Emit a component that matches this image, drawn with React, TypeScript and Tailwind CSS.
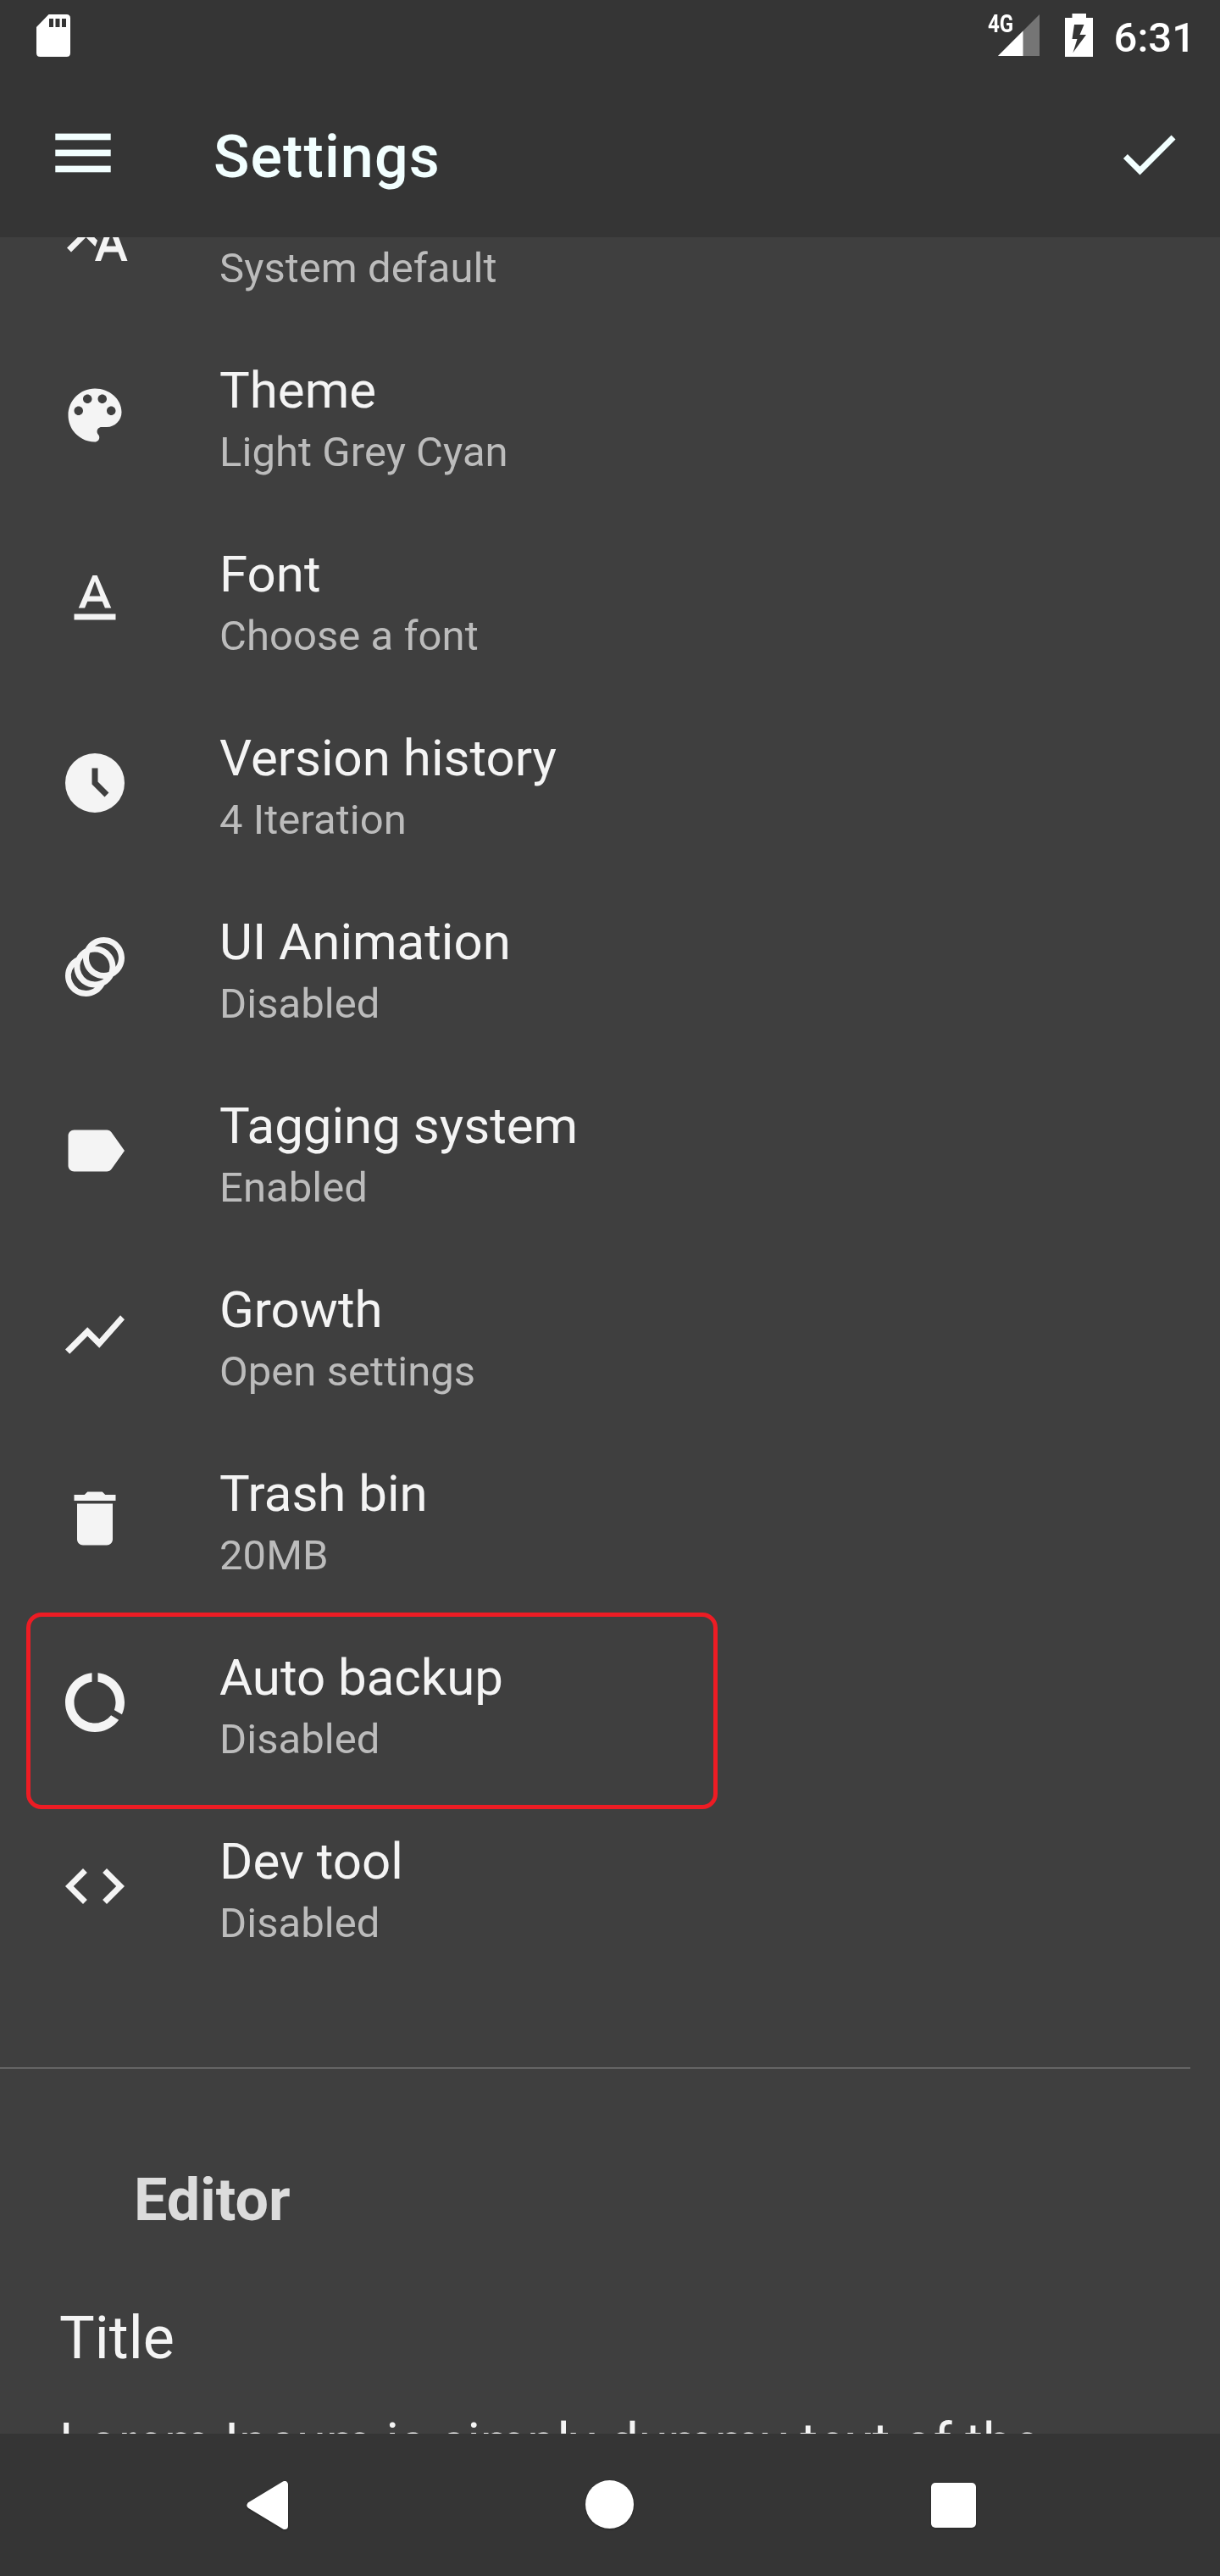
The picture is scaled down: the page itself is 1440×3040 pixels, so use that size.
import React from "react";
import {
  MdAnimation,
  MdCode,
  MdDataUsage,
  MdDelete,
  MdLabel,
  MdShowChart,
  MdTextFormat,
  MdTranslate,
} from "react-icons/md";

function ClockIcon({ className }: { className?: string }) {
  return (
    <svg viewBox="0 0 24 24" fill="currentColor" className={className}>
      <path
        fillRule="evenodd"
        d="M12 2a10 10 0 1 0 0 20a10 10 0 0 0 0-20zM11 7v5.41l4.29 4.29 1.41-1.41L13 11.59V7z"
      />
    </svg>
  );
}

function PaletteIcon({ className }: { className?: string }) {
  return (
    <svg viewBox="0 0 24 24" fill="currentColor" className={className}>
      <path d="M12 3c-4.97 0-9 4.03-9 9s4.03 9 9 9c.83 0 1.5-.67 1.5-1.5 0-.39-.15-.74-.39-1.01-.23-.26-.38-.61-.38-.99 0-.83.67-1.5 1.5-1.5H16c2.76 0 5-2.24 5-5 0-4.42-4.03-8-9-8zm-5.5 9c-.83 0-1.5-.67-1.5-1.5S5.67 9 6.5 9 8 9.67 8 10.5 7.33 12 6.5 12zm3-4C8.67 8 8 7.33 8 6.5S8.67 5 9.5 5s1.5.67 1.5 1.5S10.33 8 9.5 8zm5 0c-.83 0-1.5-.67-1.5-1.5S13.67 5 14.5 5s1.5.67 1.5 1.5S15.33 8 14.5 8zm3 4c-.83 0-1.5-.67-1.5-1.5S16.67 9 17.5 9s1.5.67 1.5 1.5-.67 1.5-1.5 1.5z" />
    </svg>
  );
}

type Item = {
  title?: string;
  detail: string;
  Icon: React.ComponentType<{ className?: string }>;
  highlighted?: boolean;
};

// The first row is scrolled half out of view, so only its detail line remains.
const items: Item[] = [
  { detail: "System default", Icon: MdTranslate },
  { title: "Theme", detail: "Light Grey Cyan", Icon: PaletteIcon },
  { title: "Font", detail: "Choose a font", Icon: MdTextFormat },
  { title: "Version history", detail: "4 Iteration", Icon: ClockIcon },
  { title: "UI Animation", detail: "Disabled", Icon: MdAnimation },
  { title: "Tagging system", detail: "Enabled", Icon: MdLabel },
  { title: "Growth", detail: "Open settings", Icon: MdShowChart },
  { title: "Trash bin", detail: "20MB", Icon: MdDelete },
  { title: "Auto backup", detail: "Disabled", Icon: MdDataUsage, highlighted: true },
  { title: "Dev tool", detail: "Disabled", Icon: MdCode },
];

function StatusBar() {
  return (
    <div className="flex h-[84px] items-start justify-between text-white">
      <svg viewBox="0 0 40 50" className="mt-[17px] ml-[43px] h-[50px] w-10" fill="currentColor">
        <path
          fillRule="evenodd"
          d="M14.5 0H35.5Q40 0 40 4.5V45.5Q40 50 35.5 50H4.5Q0 50 0 45.5V15zM15 5v10h5V5zM22.5 5v10h5V5zM30 5v10h5V5z"
        />
      </svg>
      <div className="flex items-start pr-[29px]">
        <span className="mt-[14px] w-[12px] origin-left scale-x-[0.83] text-[29px] leading-[29px] font-bold whitespace-nowrap">
          4G
        </span>
        <svg viewBox="0 0 49 49" className="mt-[17px] h-[49px] w-[49px]">
          <path d="M49 0V49H0z" fill="#757575" />
          <path d="M29.5 19.5V49H0z" fill="#fff" />
        </svg>
        <svg viewBox="0 0 33 51" className="mt-[16px] ml-[30px] h-[51px] w-[33px]" fill="currentColor">
          <path
            fillRule="evenodd"
            d="M8.5 0H25V5H33V51H0V5H8.5zM11 13L8.5 30H14.5L9.5 46L25 25H17.5L22.5 13z"
          />
        </svg>
        <span className="mt-[16px] ml-[25px] text-[49px] leading-[57px] font-medium">6:31</span>
      </div>
    </div>
  );
}

function AppBar() {
  return (
    <div className="flex h-[196px] items-center text-[#f2ffff]">
      <svg viewBox="0 0 66 48" className="mb-[2px] ml-[65px] h-12 w-[66px]" fill="currentColor">
        <rect x="0.3" y="0.6" width="65.4" height="7.7" />
        <rect x="0.3" y="19.6" width="65.4" height="7.7" />
        <rect x="0.3" y="38.6" width="65.4" height="7.7" />
      </svg>
      <h1 className="ml-[121px] flex-1 pt-[6px] text-[70px] leading-[82px] font-medium tracking-[1.1px]">
        Settings
      </h1>
      <svg viewBox="0 0 24 24" className="mr-[42px] h-[84px] w-[84px]" fill="currentColor">
        <path d="M9 16.17 4.83 12l-1.42 1.41L9 19 21 7l-1.41-1.41z" />
      </svg>
    </div>
  );
}

function SettingRow({ title, detail, Icon, highlighted }: Item) {
  return (
    <li className="relative flex h-[217px] items-start pl-[70px]">
      {highlighted && (
        <div className="absolute top-[3px] left-[31px] h-[232px] w-[816px] rounded-[18px] border-[5px] border-[#ed1c24]" />
      )}
      <Icon className="mt-[67px] h-[84px] w-[84px] text-[#f4f4f4]" />
      <div className="ml-[105px] pt-[44px]">
        <div className="h-[71px] text-[60px] leading-[71px] text-[#f4f4f4]">{title}</div>
        <div className="mt-2 text-[49px] leading-[59px] tracking-[0.05px] text-[#bcbcbc]">{detail}</div>
      </div>
    </li>
  );
}

function NavBar() {
  return (
    <nav className="flex h-[168px] shrink-0 items-start bg-[#353535] text-white">
      <svg
        viewBox="0 0 49 57"
        className="mt-[56px] ml-[291px] h-[57px] w-[49px] overflow-visible drop-shadow-[0_1px_1px_rgba(0,0,0,0.3)]"
        fill="currentColor"
        stroke="currentColor"
        strokeWidth="8"
        strokeLinejoin="round"
      >
        <path d="M45 4V53L4.5 28.5z" />
      </svg>
      <div className="mt-[55px] ml-[351px] h-[57px] w-[57px] rounded-full bg-white drop-shadow-[0_1px_1px_rgba(0,0,0,0.3)]" />
      <div className="mt-[58px] ml-[351px] h-[53px] w-[53px] rounded-[5px] bg-white drop-shadow-[0_1px_1px_rgba(0,0,0,0.3)]" />
    </nav>
  );
}

export default function App() {
  return (
    <div className="flex h-[3040px] w-[1440px] flex-col overflow-hidden bg-[#3f3f3f] font-[Roboto,sans-serif]">
      <header className="h-[280px] shrink-0 bg-[#353535]">
        <StatusBar />
        <AppBar />
      </header>
      <main className="h-[2592px] shrink-0 overflow-hidden">
        <ul className="mt-[-116px]">
          {items.map((item, i) => (
            <SettingRow key={i} {...item} />
          ))}
        </ul>
        <div className="mt-[106px] mr-[35px] h-px bg-[#929292]" />
        <h2 className="mt-[113px] ml-[158px] text-[70px] leading-[84px] font-bold text-[#dcdcdc]">Editor</h2>
        <div className="mt-[79px] ml-[70px] text-[70px] leading-[84px] text-[#f4f4f4]">Title</div>
        <p className="mt-[45px] ml-[70px] text-[63px] leading-[73px] whitespace-nowrap text-[#f4f4f4]">
          Lorem Ipsum is simply dummy text of the
        </p>
      </main>
      <NavBar />
    </div>
  );
}
